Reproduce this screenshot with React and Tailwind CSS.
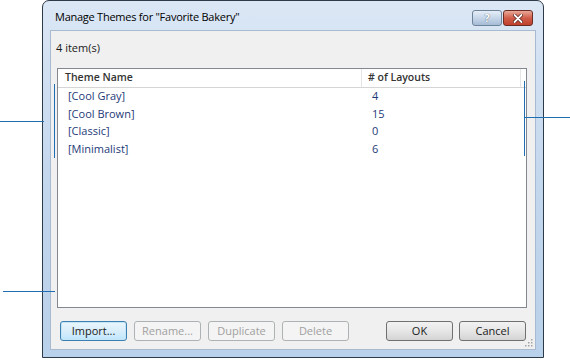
import React from 'react';

const themes = [
  { name: '[Cool Gray]', layouts: 4 },
  { name: '[Cool Brown]', layouts: 15 },
  { name: '[Classic]', layouts: 0 },
  { name: '[Minimalist]', layouts: 6 },
];

function DlgButton({ children, disabled, focused }) {
  let cls = 'border-[#707070] bg-gradient-to-b from-[#f2f2f2] via-[#e6e6e6] to-[#d4d4d4] text-[#1a1a1a]';
  if (focused) cls = 'border-[#3c7fb1] bg-gradient-to-b from-[#eaf6fd] via-[#d9eefa] to-[#bee6fd] text-[#1a1a1a] shadow-[inset_0_0_0_1px_#c4e5f6]';
  if (disabled) cls = 'border-[#adb2b5] bg-[#f4f4f4] text-[#a0a0a0]';
  return (
    <div className={`w-[67px] h-[20px] flex items-center justify-center rounded-[3px] border text-[11px] ${cls}`}>
      {children}
    </div>
  );
}

export default function App() {
  return (
    <div className="relative w-[570px] h-[360px] bg-white overflow-hidden" style={{ fontFamily: '"Open Sans", "Noto Sans", sans-serif' }}>
      {/* dialog window */}
      <div className="ml-[42px] w-[502px] h-[358px] flex flex-col rounded-t-[7px] border border-[#2d3a48] bg-gradient-to-b from-[#dbe7f5] via-[#c3d7ed] to-[#b9d1ea]">
        {/* title bar */}
        <div className="h-[29px] flex items-start pl-[12px] pr-[10px]">
          <div className="pt-[8px] text-[11px] text-black tracking-[-0.25px]">Manage Themes for "Favorite Bakery"</div>
          <div className="ml-auto mt-[9px] flex gap-[1px]">
            <div className="w-[30px] h-[16px] rounded-[3px] border border-[#6f8398] bg-gradient-to-b from-[#e6eef8] via-[#c6d6e9] to-[#a6bcd6] flex items-center justify-center text-[11px] font-bold text-white [text-shadow:0_0_1px_#2a3a4c]">?</div>
            <div className="w-[30px] h-[16px] rounded-[3px] border border-[#6b2c24] bg-gradient-to-b from-[#e9a99a] via-[#cf5d49] to-[#c0402b] flex items-center justify-center">
              <svg width="10" height="9" viewBox="0 0 10 9">
                <path d="M1.5 1 L8.5 8 M8.5 1 L1.5 8" stroke="#4a1a14" strokeWidth="3.2" strokeLinecap="round" />
                <path d="M1.5 1 L8.5 8 M8.5 1 L1.5 8" stroke="#ffffff" strokeWidth="1.8" strokeLinecap="round" />
              </svg>
            </div>
          </div>
        </div>

        {/* client area */}
        <div className="relative flex-1 mx-[7px] mb-[7px] bg-[#f0f0f0] border border-[#a7bad0] flex flex-col">
          <div className="pl-[5px] pt-[9px] h-[37px] text-[11px] text-[#1a1a1a]">4 item(s)</div>

          {/* list box */}
          <div className="ml-[6px] mr-[8px] h-[240px] border border-[#828790] bg-white flex flex-col">
            <div className="h-[19px] flex items-center border-b border-[#d5d5d5] text-[10.5px] font-semibold text-[#333333]">
              <div className="w-[304px] pl-[7px] border-r border-[#e5e5e5] h-full flex items-center">Theme Name</div>
              <div className="pl-[6px] flex-1">
                # of Layouts
              </div>
              <div className="w-[6px] h-full border-l border-[#e5e5e5]" />
            </div>
            {themes.map((t) => (
              <div key={t.name} className="h-[17.4px] flex items-center text-[11px] text-[#1e3a78]">
                <div className="w-[305px] pl-[10px]">{t.name}</div>
                <div className="pl-[9px]">{t.layouts}</div>
              </div>
            ))}
          </div>

          {/* buttons */}
          <div className="mt-[13px] ml-[9px] mr-[9px] flex items-center">
            <div className="flex gap-[7px]">
              <DlgButton focused>Import...</DlgButton>
              <DlgButton disabled>Rename...</DlgButton>
              <DlgButton disabled>Duplicate</DlgButton>
              <DlgButton disabled>Delete</DlgButton>
            </div>
            <div className="ml-auto flex gap-[6px]">
              <DlgButton>OK</DlgButton>
              <DlgButton>Cancel</DlgButton>
            </div>
          </div>

          {/* resize grip */}
          <svg className="absolute right-[1px] bottom-[1px]" width="10" height="10" viewBox="0 0 10 10">
            {[[8, 2], [8, 5], [5, 5], [8, 8], [5, 8], [2, 8]].map(([x, y]) => (
              <rect key={`${x}-${y}`} x={x - 1} y={y - 1} width="1.5" height="1.5" fill="#a3a3a3" />
            ))}
          </svg>
        </div>
      </div>

      {/* callout lines */}
      <div className="absolute left-0 top-[121px] w-[44px] h-px bg-[#1f6db3]" />
      <div className="absolute left-[54px] top-[84px] w-px h-[74px] bg-[#1f6db3]" />
      <div className="absolute left-[524px] top-[81px] w-px h-[75px] bg-[#1f6db3]" />
      <div className="absolute left-[524px] top-[117px] w-[46px] h-px bg-[#1f6db3]" />
      <div className="absolute left-[3px] top-[291px] w-[52px] h-px bg-[#1f6db3]" />
    </div>
  );
}
